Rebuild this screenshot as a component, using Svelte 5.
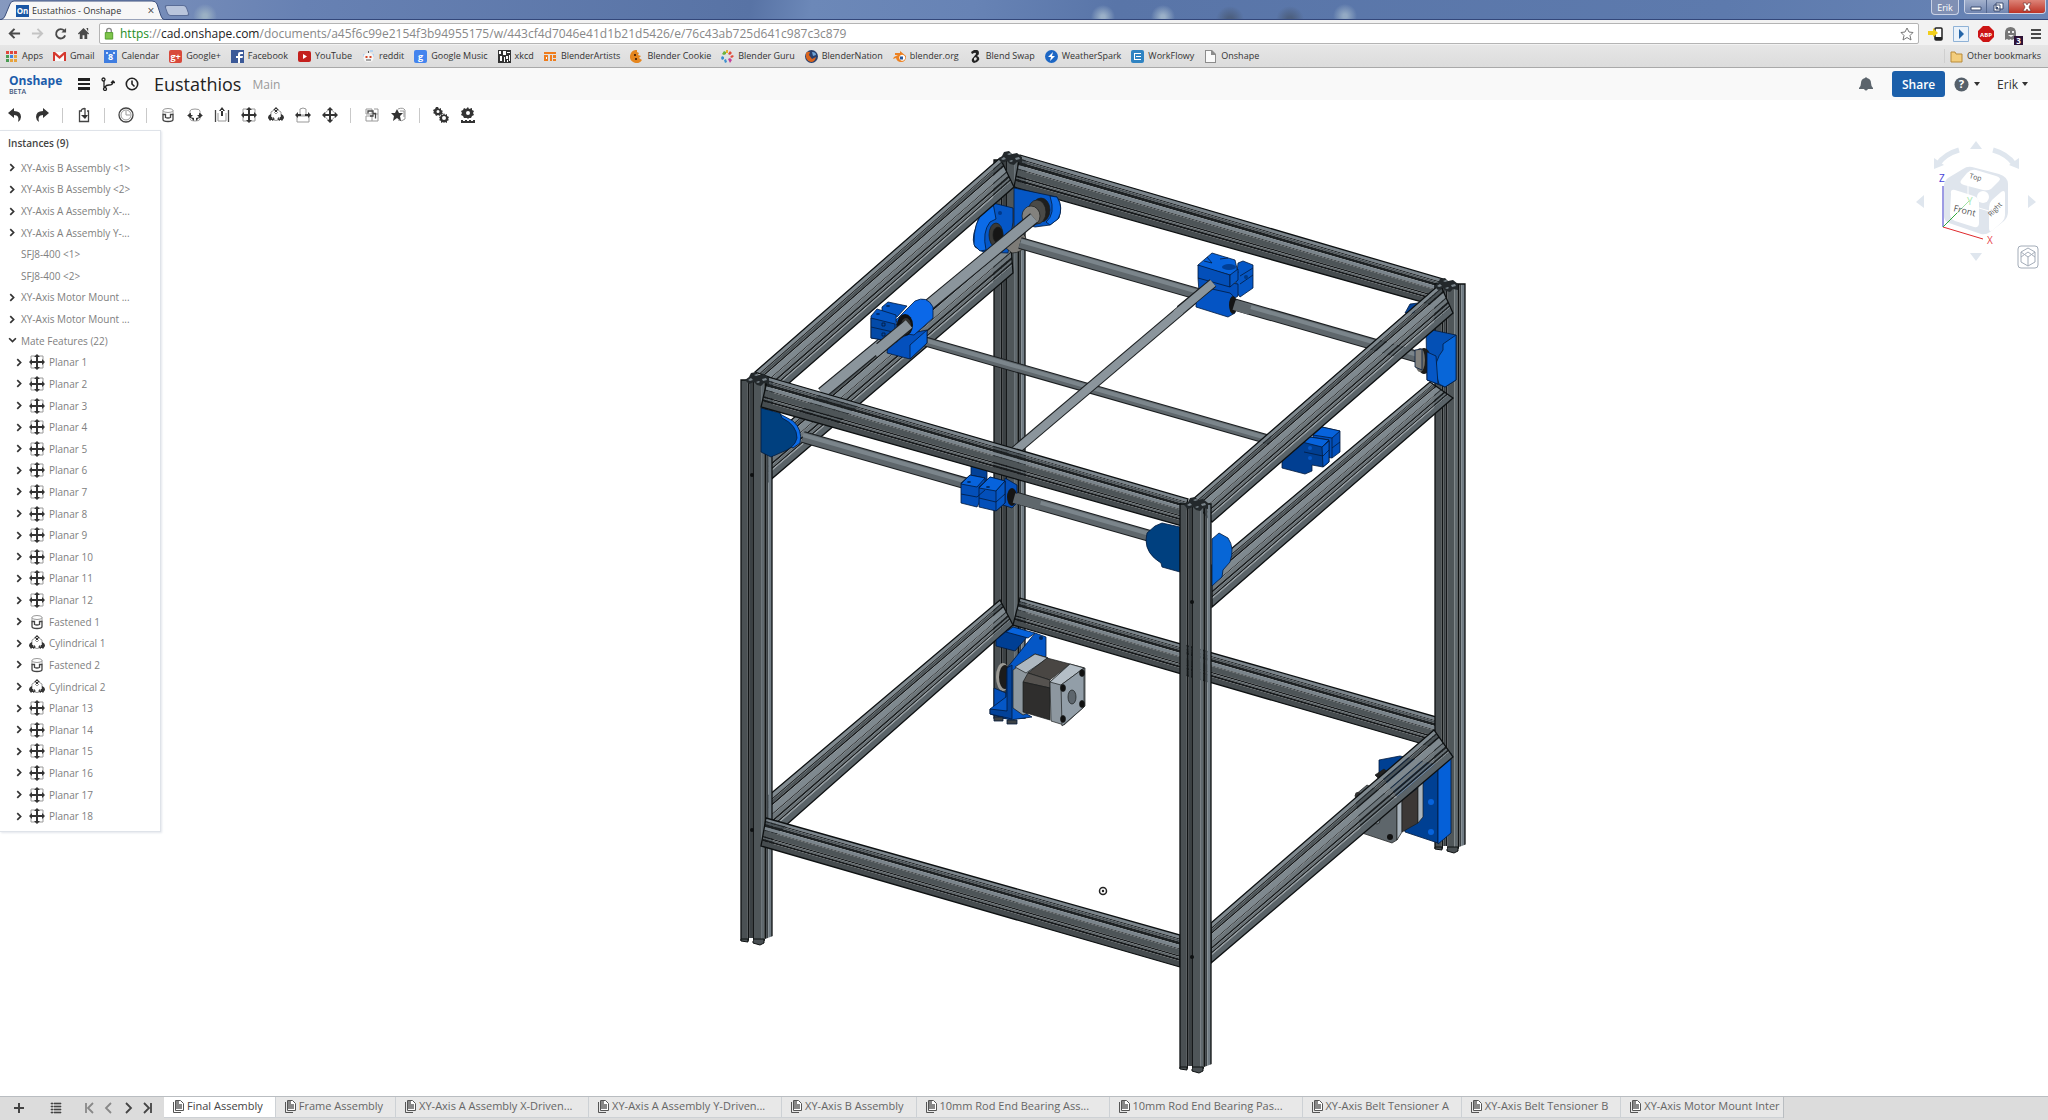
<script lang="ts">
	type Pt = [number, number];
	type Strip = [number, number, string];
	type Beam = { a: Pt; b: Pt; c: Pt; d: Pt; profile: Strip[] };
	type Icon = { line?: string; soft?: string; fill?: string };

	const url = {
		scheme: 'https',
		sep: '://',
		host: 'cad.onshape.com',
		path: '/documents/a45f6c99e2154f3b94955175/w/443cf4d7046e41d1b21d5426/e/76c43ab725d641c987c3c879'
	};

	const round = 'M2 0h9a2 2 0 0 1 2 2v9a2 2 0 0 1-2 2H2a2 2 0 0 1-2-2V2a2 2 0 0 1 2-2z';
	const disc = 'M6.500 0a6.500 6.500 0 1 1 0 13a6.500 6.500 0 1 1 0-13z';

	const bookmarks: { label: string; shapes: [string, string][]; letter?: string }[] = [
		{
			label: 'Apps',
			shapes: [
				['#e0463c', 'M1 1h3v3H1zM5 1h3v3H5zM9 1h3v3H9z'],
				['#4a9c52', 'M1 5h3v3H1z'],
				['#3f7fe0', 'M5 5h3v3H5z'],
				['#e8a33d', 'M9 5h3v3H9zM5 9h3v3H5zM9 9h3v3H9z'],
				['#4a9c52', 'M1 9h3v3H1z']
			]
		},
		{ label: 'Gmail', shapes: [['#fafafa', 'M1 2h11v9H1z'], ['#d5392f', 'M0 2h2l4.500 4L11 2h2v9h-2V5L6.500 9 2 5v6H0z']] },
		{ label: 'Calendar', shapes: [['#3f7de0', 'M0 0h13v13H0z'], ['#cfe0fb', 'M2 2h2v2H2zM9 2h2v2H9z']], letter: '8' },
		{ label: 'Google+', shapes: [['#d8493b', round]], letter: 'g+' },
		{ label: 'Facebook', shapes: [['#3b5998', 'M0 0h13v13H0z'], ['#fff', 'M7 13V8H5V6h2V4q0-2 2-2h3v2h-2q-1 0-1 1v1h3l-.5 2H9v5z']] },
		{ label: 'YouTube', shapes: [['#c4201d', 'M2 1h9q2 0 2 2v7q0 2-2 2H2q-2 0-2-2V3q0-2 2-2z'], ['#fff', 'M5 4l4 2.500L5 9z']] },
		{
			label: 'reddit',
			shapes: [
				['#b5d2ee', 'M1 4h3v3H1zM9 4h3v3H9zM8 0h3v2H8z'],
				['#f6f6f6', 'M6.500 3q5 0 5 4.500t-5 4.500t-5-4.500T6.500 3z'],
				['#d94422', 'M3.500 6h2v2h-2zM7.500 6h2v2h-2z'],
				['#555', 'M4 9.500h5v1H4zM6 1h1v2H6z']
			]
		},
		{ label: 'Google Music', shapes: [['#4484ee', round]], letter: 'g' },
		{
			label: 'xkcd',
			shapes: [
				['#333', 'M0 0h13v13H0z'],
				['#fff', 'M1 1h2v3H1zM5 1h3v4H5zM9 2h3v1H9zM2 6h2v5H2zM6 7h1v5H6zM8 6h2v3H8zM11 5h1v6h-1zM9 10h1v2H9z']
			]
		},
		{ label: 'BlenderArtists', shapes: [['#ee7d1e', 'M0 2h12v2H0zM0 5h4v6H0zM6 5h2v6H6zM9 5h3v3H9zM9 9h3v2H9z'], ['#fff', 'M2 7h1v2H2z']] },
		{ label: 'Blender Cookie', shapes: [['#e5861f', 'M7 0a6.500 6.500 0 1 0 5 10L9 8l2-2-3-1 1-2-2-1z'], ['#5a2d0a', 'M4 4h2v2H4zM5 8h2v2H5z']] },
		{
			label: 'Blender Guru',
			shapes: [
				['#e24a3a', 'M9 1l2 2-2 2-2-1zM11 5l2 1-2 2-2-1z'],
				['#6db33f', 'M3 1l2 1v2L3 5 1 4z'],
				['#3c8fd0', 'M1 6l2 1v2l-2 1-1-2zM3 10l2-1 1 3-2 1z'],
				['#c43f9a', 'M7 9l2-1 2 2-2 3z'],
				['#eab42c', 'M5 0h2v3H5z']
			]
		},
		{ label: 'BlenderNation', shapes: [['#28406f', disc], ['#d9641e', 'M1 3q2-2 4-1L4 5l3 4 4-2q-1 5-5 5Q0 11 1 3z'], ['#6fa4d8', 'M7 2q4 0 4 3L8 6z']] },
		{
			label: 'blender.org',
			shapes: [
				['#ec8121', 'M7 1l6 5q0 6-5 6-4 0-5-4L0 9l1-2 4-2H2V3h5z'],
				['#fff', 'M8 5a3 3 0 1 1 0 5.500A3 3 0 0 1 8 5z'],
				['#28579b', 'M7 6.500h3v3H7z']
			]
		},
		{ label: 'Blend Swap', shapes: [['#222', 'M5 0q5-1 5 3 0 2-2 3 3 1 2 4-2 3-5 3-3-1-2-4l4-5q0-2-2-1L3 4 2 2z'], ['#e0e0e0', 'M5 8l2-1 1 2-2 2-1-1z']] },
		{ label: 'WeatherSpark', shapes: [['#1c66c4', disc], ['#fff', 'M8 2L3 7h3l-1 4 5-5H7z']] },
		{ label: 'WorkFlowy', shapes: [['#2f83c2', round], ['#fff', 'M3 3h7v1H3zM5 6h5v1H5zM3 9h7v1H3zM3 3h1v7H3z']] },
		{ label: 'Onshape', shapes: [['#8c8c8c', 'M1 0h7l4 4v9H1z'], ['#fafafa', 'M2 1h5v4h4v7H2z']] }
	];

	const fourWay = 'M7 3h2v4h4V5l3 3-3 3V9H9v4h2l-3 3-3-3h2V9H3v2L0 8l3-3v2h4zM5 3l3-3 3 3z';
	const icons: Record<string, Icon> = {
		undo: { fill: 'M7 1v3q7 0 7 6 0 3-3 5 2-7-4-7v3L1 6z' },
		redo: { fill: 'M9 1v3Q2 4 2 10q0 3 3 5-2-7 4-7v3l6-5z' },
		insert: { line: 'M6 4H3.500v10.500h9V4H11M9 1v8M9 1.500q-4 0-4 3', fill: 'M5 8h7l-3 4z' },
		history: { line: 'M8 1a7 7 0 1 1 0 14A7 7 0 0 1 8 1z', soft: 'M8 3a5 5 0 1 1 0 10A5 5 0 0 1 8 3zM8 4v4h4' },
		fastened: {
			soft: 'M3 3.500q0-2 5-2t5 2-5 2-5-2zM3 3.500v4M13 3.500v4',
			line: 'M3 7.500v5q0 2 5 2t5-2v-5h-2.500v3q-2.500 1-5 0v-3z'
		},
		revolute: {
			soft: 'M3 4q0-2 5-2t5 2v8q0 2-5 2t-5-2z',
			fill: 'M4 6v2l2 0-3 3-3-3h1Q2 6 4 6zM12 6v2l-2 0 3 3 3-3h-1q-1-2-3-2zM3 10l4 1v3zM13 10l-4 1v3z'
		},
		slider: { soft: 'M4 6v8h8V6', line: 'M1.500 3v12M14.500 3v12', fill: 'M7 3h2v6H7zM5 4l3-4 3 4z' },
		planar: { soft: 'M2 2h12v12H2z', fill: fourWay },
		cylindrical: {
			soft: 'M3 5q5-4 10 0v6q-5 5-10 0z',
			fill: 'M7 2h2v4H7zM5 3l3-3 3 3zM6 5h4L8 7zM3 7v3h3l-4 4-2-3q0-3 3-4zM13 7v3h-3l4 4 2-3q0-3-3-4zM4 10l3 2-3 2zM12 10l-3 2 3 2z'
		},
		pin: { soft: 'M5 2q3-2 6 0v6H5zM2 9h12v6H2z', fill: 'M0 8l3-3v2h3v2H3v2zM16 8l-3-3v2h-3v2h3v2z' },
		ball: { soft: 'M8 3a5 5 0 1 1 0 10A5 5 0 0 1 8 3z', fill: fourWay },
		group: { line: 'M4 6.500V4h5v5H6M11.500 11.500v-5H9', soft: 'M2 2h6v5H2zM10 2h4v12H2V9h6v5M10 7h4' },
		relation: { soft: 'M7 2q5-2 7 1v9q-3 3-7 1M9 4h4v6', fill: 'M6 2l2 4 4 0-3 3 1 5-4-3-4 3 1-5-3-3h4z' },
		gears: { fill: 'M5 0l1 2 2-1v2l2 1-1 1 1 2-2 0-1 2-2-1-2 1-1-2-2-1 1-1-1-2 2-1 1-2zM5 3a1.500 1.500 0 1 0 0 3 1.500 1.500 0 0 0 0-3zM11 6l1 2 2-1 0 2 2 1-1 2 1 1-2 1v2l-2-1-1 1-1-1-2 1 0-2-2-1 1-1-1-2 2-1v-2l2 1zM11 9a2 2 0 1 0 0 4 2 2 0 0 0 0-4z' },
		rack: { fill: 'M8 0l1 2 3-1v2l2 1-1 2 1 2-2 1-1 2-2 0-1 1-1-1-3 0-1-2-2-1 1-2-1-2 2-1 1-2 2 1zM8 4a2 2 0 1 0 0 4 2 2 0 0 0 0-4zM1 13h2v1h2v-1h2v1h2v-1h2v1h2v-1h2v3H1z' }
	};

	const tools = [
		['undo', 'redo'],
		['insert'],
		['history'],
		['fastened', 'revolute', 'slider', 'planar', 'cylindrical', 'pin', 'ball'],
		['group', 'relation'],
		['gears', 'rack']
	];

	const instances = [
		{ name: 'XY-Axis B Assembly <1>', nested: true },
		{ name: 'XY-Axis B Assembly <2>', nested: true },
		{ name: 'XY-Axis A Assembly X-...', nested: true },
		{ name: 'XY-Axis A Assembly Y-...', nested: true },
		{ name: 'SFJ8-400 <1>', nested: false },
		{ name: 'SFJ8-400 <2>', nested: false },
		{ name: 'XY-Axis Motor Mount ...', nested: true },
		{ name: 'XY-Axis Motor Mount ...', nested: true }
	];

	const mates = [
		...Array.from({ length: 12 }, (_, i) => ({ kind: 'planar', name: `Planar ${i + 1}` })),
		{ kind: 'fastened', name: 'Fastened 1' },
		{ kind: 'cylindrical', name: 'Cylindrical 1' },
		{ kind: 'fastened', name: 'Fastened 2' },
		{ kind: 'cylindrical', name: 'Cylindrical 2' },
		...Array.from({ length: 6 }, (_, i) => ({ kind: 'planar', name: `Planar ${i + 13}` }))
	];

	const tabs = [
		'Final Assembly',
		'Frame Assembly',
		'XY-Axis A Assembly X-Driven...',
		'XY-Axis A Assembly Y-Driven...',
		'XY-Axis B Assembly',
		'10mm Rod End Bearing Ass...',
		'10mm Rod End Bearing Pas...',
		'XY-Axis Belt Tensioner A',
		'XY-Axis Belt Tensioner B',
		'XY-Axis Motor Mount Inter'
	];
	let activeTab = 0;
	let matesOpen = true;

	// extrusion profiles: slices across a beam, from its first edge to its second
	const sideProfile: Strip[] = [
		[0, 0.12, '#7f898f'],
		[0.12, 0.16, '#22272a'],
		[0.16, 0.24, '#4c5458'],
		[0.24, 0.29, '#15181a'],
		[0.29, 0.47, '#7f898f'],
		[0.47, 0.5, '#23282b'],
		[0.5, 0.61, '#6d767b'],
		[0.61, 0.67, '#1b1f21'],
		[0.67, 0.73, '#687176'],
		[0.73, 0.78, '#1b1f21'],
		[0.78, 0.81, '#8a949a'],
		[0.81, 1, '#5a6368']
	];
	const frontProfile: Strip[] = [
		[0, 0.11, '#7a848b'],
		[0.11, 0.15, '#24292c'],
		[0.15, 0.21, '#4b5358'],
		[0.21, 0.31, '#1d2123'],
		[0.31, 0.42, '#7a848b'],
		[0.42, 0.45, '#2b3033'],
		[0.45, 0.64, '#4e5558'],
		[0.64, 0.69, '#16191b'],
		[0.69, 0.74, '#5b6367'],
		[0.74, 0.81, '#181b1d'],
		[0.81, 1, '#464c4f']
	];
	const postProfile: Strip[] = [
		[0, 0.22, '#4a5053'],
		[0.22, 0.28, '#111415'],
		[0.28, 0.36, '#3b4144'],
		[0.36, 0.42, '#15181a'],
		[0.42, 0.65, '#4f5659'],
		[0.65, 0.75, '#5f686d'],
		[0.75, 0.81, '#111415'],
		[0.81, 0.88, '#3b4144'],
		[0.88, 1, '#717c84']
	];

	const side = (a: Pt, b: Pt, c: Pt, d: Pt): Beam => ({ a, b, c, d, profile: sideProfile });
	const front = (a: Pt, b: Pt, c: Pt, d: Pt): Beam => ({ a, b, c, d, profile: frontProfile });
	const post = (x: number, w: number, top: number, bottom: number): Beam => ({
		a: [x, top],
		b: [x, bottom],
		c: [x + w, bottom],
		d: [x + w, top],
		profile: postProfile
	});

	function mix(p: Pt, q: Pt, t: number) {
		return `${(p[0] + (q[0] - p[0]) * t).toFixed(1)},${(p[1] + (q[1] - p[1]) * t).toFixed(1)}`;
	}

	function slice(beam: Beam, from: number, to: number) {
		const { a, b, c, d } = beam;
		return [mix(a, d, from), mix(b, c, from), mix(b, c, to), mix(a, d, to)].join(' ');
	}

	const backFrame = [
		post(994, 31, 160, 718),
		front([1020, 598], [1440, 718], [1440, 749], [1013, 625]),
		front([1020, 155], [1443, 279], [1443, 308], [1014, 187]),
		post(1435, 30, 284, 848),
		side([768, 796], [1000, 600], [1013, 625], [768, 841]),
		side([768, 440], [1010, 232], [1013, 273], [768, 482])
	];
	const leftTop = [side([755, 372], [1000, 158], [1014, 187], [788, 384])];
	const rightLower = [side([1212, 565], [1430, 382], [1453, 398], [1212, 607])];
	const rightTop = [side([1192, 500], [1440, 284], [1453, 313], [1212, 522])];
	const rightBottom = [side([1211, 923], [1434, 730], [1453, 757], [1211, 963])];
	const frontLeft = [post(741, 31, 380, 940)];
	const frontBeams = [
		front([766, 818], [1180, 935], [1180, 967], [761, 846]),
		front([768, 377], [1188, 499], [1182, 526], [761, 407])
	];
	const frontRight = [post(1180, 31, 504, 1068)];

	const caps: Pt[] = [
		[1010, 159],
		[757, 380],
		[1196, 505],
		[1446, 286]
	];
	const feet: Pt[] = [
		[741, 940],
		[1180, 1068],
		[1435, 848]
	];
</script>

{#snippet glyph(name: string)}
	<svg class="glyph" viewBox="0 0 16 16" aria-hidden="true">
		<path class="soft" d={icons[name].soft ?? ''} />
		<path class="line" d={icons[name].line ?? ''} />
		<path class="solid" fill-rule="evenodd" d={icons[name].fill ?? ''} />
	</svg>
{/snippet}

{#snippet beams(list: Beam[])}
	{#each list as beam}
		{#each beam.profile as [from, to, fill]}
			<polygon points={slice(beam, from, to)} {fill} />
		{/each}
		<polygon points={slice(beam, 0, 1)} fill="none" stroke="#0d1011" stroke-width="1.300" />
	{/each}
{/snippet}

<div class="window">
	<header class="titlebar">
		<div class="browser-tab">
			<svg class="tab-shape" viewBox="0 0 166 20" preserveAspectRatio="none" aria-hidden="true">
				<path d="M0 20Q4 19 5 16L10 4q1-3 4-3h138q4 0 5 3l4 12q1 4 5 4z" fill="#f7f7f7" stroke="#3b4f7c" />
			</svg>
			<span class="favicon">On</span>
			<span class="browser-title">Eustathios - Onshape</span>
			<button class="close" aria-label="Close tab">×</button>
		</div>
		<button class="new-tab" aria-label="New tab"></button>
		<div class="window-buttons">
			<button class="user">Erik</button>
			<div class="group">
				<button aria-label="Minimize"><svg viewBox="0 0 12 10"><path d="M1 5h10v3H1z" fill="#fff" stroke="#3d4d70" /></svg></button>
				<button aria-label="Restore">
					<svg viewBox="0 0 12 10"><path d="M4 1h7v6H4zM2 3h6v6H2z" fill="#fff" stroke="#3d4d70" /><path d="M4 5h2v2H4z" fill="#3d4d70" /></svg>
				</button>
				<button class="exit" aria-label="Close"><svg viewBox="0 0 12 10"><path d="M2 1h3l1 2 1-2h3L8 5l2 4H7L6 7 5 9H2l2-4z" fill="#fff" stroke="#6b2a26" stroke-width=".6" /></svg></button>
			</div>
		</div>
	</header>

	<nav class="navbar" aria-label="Browser">
		<button aria-label="Back"><svg viewBox="0 0 14 14"><path d="M7 2L2 7l5 5M2 7h11" fill="none" stroke="#4a4a4a" stroke-width="2.200" /></svg></button>
		<button aria-label="Forward"><svg viewBox="0 0 14 14"><path d="M7 2l5 5-5 5M12 7H1" fill="none" stroke="#c4c4c4" stroke-width="2" /></svg></button>
		<button aria-label="Reload"><svg viewBox="0 0 14 14"><path d="M11 4a5 5 0 1 0 1 5" fill="none" stroke="#4a4a4a" stroke-width="2" /><path d="M13 1v5H8z" fill="#4a4a4a" /></svg></button>
		<button aria-label="Home"><svg viewBox="0 0 14 14"><path d="M7 1l6 6-1 1-1-1v6H8V9H6v4H3V7L2 8 1 7zM10 1h2v4z" fill="#4a4a4a" /></svg></button>
		<div class="omnibox">
			<svg class="lock" viewBox="0 0 10 14" aria-hidden="true">
				<path d="M2.500 6V4q0-2.500 2.500-2.500T7.500 4v2" fill="none" stroke="#8a8a8a" stroke-width="1.500" />
				<path d="M1 6h8v7H1z" fill="#7fc54b" stroke="#4f9a2a" />
			</svg>
			<a class="url" href="#top"><span class="scheme">{url.scheme}</span>{url.sep}<span class="host">{url.host}</span>{url.path}</a>
			<svg class="star" viewBox="0 0 14 14" aria-hidden="true"><path d="M7 1l2 4 4 .5-3 3 1 4.500-4-2.500L3 13l1-4.500-3-3L5 5z" fill="#fff" stroke="#777" /></svg>
		</div>
		<div class="extensions">
			<button aria-label="Send to phone">
				<svg viewBox="0 0 16 16"><rect x="7" y="2" width="7" height="12" rx="1" fill="#fff" stroke="#222" stroke-width="1.500" /><path d="M7 11h7v3H7z" fill="#222" /><path d="M0 5h5V2l5 5-5 4V9H0z" fill="#f2cf1c" /></svg>
			</button>
			<button aria-label="Play"><svg viewBox="0 0 16 16"><path d="M.5.5h15v15H.5z" fill="#eaf2fa" stroke="#8fb2d6" /><path d="M6 3l5 5-5 5z" fill="#2465a8" /></svg></button>
			<button aria-label="Adblock Plus">
				<svg viewBox="0 0 16 16"><path d="M5 0h6l5 5v6l-5 5H5l-5-5V5z" fill="#cc1414" /><text x="8" y="11" text-anchor="middle" class="abp">ABP</text></svg>
			</button>
			<button class="ghost" aria-label="Ghostery">
				<svg viewBox="0 0 16 16"><path d="M2 14V7q0-6 5.500-6T13 7v7l-2-1-2 1-1.500-1L6 14l-2-1z" fill="#777" /><path d="M5 5h2v2H5zM9 5h2v2H9zM5 9h6l-3 2z" fill="#eee" /></svg>
				<span>3</span>
			</button>
			<button aria-label="Menu"><svg viewBox="0 0 16 16"><path d="M3 3h10v2H3zM3 7h10v2H3zM3 11h10v2H3z" fill="#4a4a4a" /></svg></button>
		</div>
	</nav>

	<nav class="bookmarks" aria-label="Bookmarks">
		{#each bookmarks as mark}
			<a href="#top">
				<svg viewBox="0 0 13 13" aria-hidden="true">
					{#each mark.shapes as [fill, d]}
						<path {d} {fill} />
					{/each}
					{#if mark.letter}
						<text x="6.500" y="10" text-anchor="middle">{mark.letter}</text>
					{/if}
				</svg>
				{mark.label}
			</a>
		{/each}
		<a class="other" href="#top">
			<svg viewBox="0 0 13 13" aria-hidden="true"><path d="M1 2h4l1 2h6v8H1z" fill="#f3cd7c" stroke="#b98b3a" /></svg>
			Other bookmarks
		</a>
	</nav>

	<header class="app-header">
		<a class="logo" href="#top"><b>Onshape</b><small>BETA</small></a>
		<button aria-label="Document menu"><svg viewBox="0 0 14 14"><path d="M1 1h12v3H1zM1 6h12v2H1zM1 10h12v3H1z" fill="#222" /></svg></button>
		<button aria-label="Versions">
			<svg viewBox="0 0 14 14" fill="none" stroke="#222" stroke-width="1.300"><circle cx="2.500" cy="2.500" r="1.500" /><circle cx="4" cy="12" r="1.500" /><path d="M3 4v6M4 10q1-2 4-2 4 0 4-3M10 6l2-2 2 2" /></svg>
		</button>
		<button aria-label="History"><svg viewBox="0 0 14 14" fill="none" stroke="#222" stroke-width="1.600"><circle cx="7" cy="7" r="5.700" /><path d="M7 3.500V7l2.500 2.500" /></svg></button>
		<h1>Eustathios</h1>
		<span class="workspace">Main</span>
		<div class="account">
			<button class="bell" aria-label="Notifications"><svg viewBox="0 0 14 14"><path d="M7 0l1 1q4 1 4 5 0 3 2 5v1H0v-1q2-2 2-5 0-4 4-5zM5 12h4q-2 3-4 0z" fill="#5b646c" /></svg></button>
			<button class="share">Share</button>
			<button class="help" aria-label="Help">
				<svg viewBox="0 0 16 16"><circle cx="8" cy="8" r="7.500" fill="#56606a" /><text x="8" y="12" text-anchor="middle">?</text></svg>
				<i class="caret"></i>
			</button>
			<button class="profile">Erik <i class="caret"></i></button>
		</div>
	</header>

	<div class="toolbar">
		{#each tools as group, i}
			{#if i > 0}<i class="divider"></i>{/if}
			{#each group as name}
				<button aria-label={name}>{@render glyph(name)}</button>
			{/each}
		{/each}
	</div>

	<main class="stage">
		<svg class="model" viewBox="0 130 2048 966" role="img" aria-label="Final Assembly">
			{@render beams(backFrame)}

			<!-- rear left bearing mounts -->
			<g class="part">
				<path fill="#0557c6" d="M993 203L1013 208V222L1008 253L983 252L975 247Q972 240 974 233L978 220L985 210Z" />
				<path fill="#0b6be8" d="M985 210Q973 222 974 245L980 251L986 250Q982 232 990 222L996 219L993 203Z" />
				<circle cx="1000" cy="213" r="2" fill="#00388a" />
				<path fill="#0557c6" d="M1014 188L1057 197Q1063 205 1059 218L1050 225L1035 227L1024 224L1023 232L1014 230Z" />
				<path fill="#0b6be8" d="M1050 196L1057 197Q1064 208 1058 219L1050 225L1046 222Q1056 214 1050 196Z" />
			</g>
			{@render beams(leftTop)}
			<g class="metal">
				<ellipse cx="996" cy="235" rx="7" ry="12" fill="#3a3a38" />
				<ellipse cx="998" cy="235" rx="5" ry="8" fill="#161616" />
				<ellipse cx="1041" cy="210" rx="9" ry="12" fill="#1e1e1d" />
				<ellipse cx="1037" cy="212" rx="9" ry="12" fill="#4a4a47" />
				<ellipse cx="1031" cy="216" rx="9" ry="10" fill="#83827e" />
				<path fill="#7d7b77" d="M1008 236L1022 233Q1027 236 1026 244Q1022 253 1012 253L1006 248Z" />
			</g>

			<!-- rods -->
			<g class="rods">
				<path class="edge" d="M1020 243L1418 357" />
				<path class="mid" d="M1020 243L1418 357" />
				<path class="shine" d="M1021 241L1418 355" />
				<path class="edge" d="M1034 218L822 393" />
				<path class="light" d="M1034 218L822 393" />
				<path class="edge thin" d="M913 338L1270 440" />
				<path class="mid thin" d="M913 338L1270 440" />
				<path class="shine" d="M914 337L1270 439" />
				<path class="edge thin" d="M1213 283L1010 455" />
				<path class="light thin" d="M1213 283L1010 455" />
				<path class="edge" d="M803 437L1150 536" />
				<path class="mid" d="M803 437L1150 536" />
				<path class="shine" d="M803 435L1150 534" />
			</g>

			<!-- left and rear carriages -->
			<g class="part">
				<path fill="#0450bd" d="M888 343L912 333L927 330V343L910 359L887 353Z" />
				<path fill="#0763dc" d="M910 345L927 330V343L910 359Z" />
				<path fill="#0557c6" d="M882 307L888 302L907 306L897 317L882 312Z" />
				<path fill="#0557c6" d="M871 316L877 309L896 315L897 342L871 338Z" />
				<path fill="#034aa8" d="M871 318L895 324V342L871 338Z" />
				<path fill="none" d="M871 327L893 332M882 323h3v3h-3zM882 333h3v3h-3z" />
				<ellipse cx="888" cy="306" rx="2" ry="1" fill="#002b66" />
				<ellipse cx="878" cy="314" rx="2" ry="1" fill="#002b66" />
				<path fill="#0b68e8" d="M896 320L915 301Q927 295 933 307V318L914 335Q900 335 896 320Z" />
				<ellipse cx="905" cy="325" rx="8" ry="11" fill="#111" />
				<ellipse cx="906" cy="326" rx="5" ry="8" fill="#33322f" />
				<path fill="#0557c6" d="M1238 263L1243 261L1253 265V288L1240 297L1235 290Z" />
				<path fill="none" d="M1240 284L1253 275M1240 276L1253 268" />
				<path fill="#0450bd" d="M1198 278L1238 284V296L1232 300L1199 292Z" />
				<path fill="#0454c4" d="M1196 297L1203 287L1230 293Q1238 298 1235 313L1228 317L1196 307Z" />
				<path fill="#0763dc" d="M1198 265L1212 253L1235 260L1238 273L1230 275L1198 266Z" />
				<path fill="#034fb9" d="M1198 265L1230 275V287L1198 278Z" />
				<path fill="#0557c6" d="M1230 275L1238 269V280L1230 287Z" />
				<ellipse cx="1229" cy="267" rx="7" ry="3" fill="#013f96" />
				<path fill="none" d="M1204 261L1212 263L1207 257M1220 259L1228 258" />
				<ellipse cx="1233" cy="305" rx="4" ry="9" fill="#151515" />
				<circle cx="1246" cy="277" r="2" fill="#003a88" />
			</g>
			<g class="rods">
				<path class="edge" d="M907 326L880 348" />
				<path class="light" d="M909 324L874 353" />
				<path class="edge thin" d="M1213 283L1180 310" />
				<path class="light thin" d="M1213 283L1176 314" />
				<path class="mid" d="M1234 305L1250 310" />
			</g>

			<!-- right hand side -->
			<path class="dark-blue" d="M1405 313L1410 304L1418 303L1414 313Z" />
			{@render beams(rightLower)}
			<g class="part">
				<path fill="#0450b5" d="M1426 330L1432 330L1456 335V380L1445 387L1427 380Z" />
				<path fill="#0866d8" d="M1456 335L1443 344V350Q1434 361 1436 374L1439 384L1445 387L1456 380Z" />
				<ellipse cx="1424" cy="361" rx="7" ry="13" fill="#1c1c1b" />
				<ellipse cx="1420" cy="360" rx="5" ry="12" fill="#6f6e6a" />
				<path fill="#83827e" d="M1415 350L1422 349V370L1415 367Z" />
				<path fill="#0557c6" d="M1427 352L1436 356L1438 384L1427 380Z" />
				<path fill="#034fb9" d="M1313 435L1322 427L1340 431V452L1332 458L1313 455Z" />
				<path fill="#0763dc" d="M1313 435L1322 427L1340 431L1332 438Z" />
				<path fill="#013f92" d="M1302 442L1310 437L1329 440V462L1323 467L1312 465V471L1305 474L1282 468V460Z" />
				<path fill="#0763dc" d="M1302 442L1310 437L1329 440L1322 447Z" />
				<path fill="#0557c6" d="M1322 447L1329 441V462L1323 467Z" />
				<path fill="none" d="M1304 452L1323 456L1329 450M1332 448L1340 442M1332 438V458" />
				<circle cx="1310" cy="448" r="2" fill="#0557c6" />
				<circle cx="1310" cy="458" r="2" fill="#0557c6" />
			</g>
			{@render beams(rightTop)}

			<!-- rear motor -->
			<g class="part">
				<path fill="#003f94" d="M996 640L1008 630L1028 636L1015 651L996 646Z" />
				<path fill="#0763dc" d="M1006 632L1013 627L1035 633L1028 638Z" />
				<ellipse cx="1003" cy="677" rx="7" ry="14" fill="#9b9a95" />
				<ellipse cx="1005" cy="677" rx="6" ry="12" fill="#1c1c1b" />
				<path fill="#034fb9" d="M994 688L1006 693V702L994 707Z" />
				<path fill="#0557c6" d="M1007 668L1035 633L1046 637V657L1033 655L1015 670V707L1032 717L1010 720L990 714V709L1006 697Z" />
				<path fill="#034299" d="M1007 668L1012 665V719L990 714V709L1007 711Z" />
				<circle cx="1041" cy="638" r="2" fill="#00275c" />
				<path fill="#3c4144" d="M994 717h9v4h-9zM1007 720h10v4h-10z" />
			</g>
			<g class="metal">
				<path fill="#8e989f" d="M1013 670L1035 654L1048 658V705L1023 715L1013 708Z" />
				<path fill="#aeb8c0" d="M1015 667L1035 654L1048 658L1026 673Z" />
				<path fill="#494643" d="M1028 673L1047 658L1070 664L1050 680Z" />
				<path fill="#55524f" d="M1023 682L1028 673L1050 680V688Z" />
				<path fill="#2f2e2d" d="M1023 682L1050 688V720L1023 712Z" />
				<path fill="#8d979f" d="M1050 682L1070 664L1085 668V706L1064 725L1051 721Z" />
				<path fill="#b4bec6" d="M1050 682L1070 664L1084 668L1061 685Z" />
				<path fill="#929ea8" d="M1061 685L1084 668V707L1062 726Z" />
				<ellipse cx="1072" cy="697" rx="4" ry="7" fill="#5d666d" />
				{#each [[1063, 688], [1082, 673], [1082, 704], [1063, 719]] as [cx, cy]}
					<ellipse {cx} {cy} rx="2.500" ry="3.500" fill="#111" />
				{/each}
			</g>

			<!-- right motor -->
			<g class="part">
				<path fill="#004093" d="M1379 760L1400 756L1438 765V843L1405 832L1400 800L1379 773Z" />
				<path fill="#0560d8" d="M1438 763L1451 753V833L1438 844Z" />
				{#each [772, 802, 832] as cy}
					<circle cx="1431" {cy} r="3" fill="#0763dc" />
				{/each}
			</g>
			<g class="metal">
				<path fill="#5e666b" d="M1355 795L1367 785L1397 800V840L1392 843L1362 833Z" />
				<path fill="#a9b4bd" d="M1397 802L1402 799V832L1397 840Z" />
				<path fill="#3c3836" d="M1402 800L1418 788V823L1402 832Z" />
				<path fill="#a9b4bd" d="M1418 785L1423 782V817L1418 823Z" />
				<path fill="#222" d="M1375 775L1384 769L1390 774L1380 780Z" />
				<circle cx="1390" cy="837" r="3" fill="#111" />
				<circle cx="1358" cy="795" r="3" fill="#333" />
				<ellipse cx="1377" cy="820" rx="3" ry="4" fill="#8e989f" />
			</g>
			{@render beams(rightBottom)}

			<!-- front -->
			{@render beams(frontLeft)}
			<g class="part">
				<path fill="#0b6be8" d="M780 414L793 421Q803 430 800 443L793 448L780 440Z" />
				<path fill="#00407f" d="M761 408L780 413L782 418Q797 425 797 438Q795 448 780 453L771 457L761 452Z" />
			</g>
			<g class="part">
				<path fill="#034299" d="M971 466L987 470V482L971 478Z" />
				<path fill="#034fb9" d="M961 483L970 475L985 478V492L977 507L961 503Z" />
				<path fill="#0763dc" d="M961 484L970 475L985 478L977 487Z" />
				<path fill="#0450bd" d="M1005 478L1017 485V503L1012 508L1003 505Z" />
				<path fill="#034fb9" d="M979 487L990 477L1005 481V503L996 511L979 507Z" />
				<path fill="#0763dc" d="M979 488L990 477L1005 481L996 491Z" />
				<path fill="#0557c6" d="M996 491L1005 481V503L996 511Z" />
				<path fill="none" d="M961 494L977 497L985 490M979 498L996 502L1005 494" />
				<ellipse cx="969" cy="482" rx="2" ry="1" fill="#002b66" />
				<ellipse cx="988" cy="487" rx="2" ry="1" fill="#002b66" />
				<ellipse cx="1012" cy="497" rx="5" ry="9" fill="#151515" />
			</g>
			<g class="rods"><path class="mid" d="M1014 498L1040 505" /></g>
			{@render beams(frontBeams)}
			<g class="part">
				<path fill="#00407f" d="M1162 523L1180 527V572L1162 567L1161 563Q1146 554 1146 540L1147 533L1155 526Z" />
				<path fill="#0766d6" d="M1212 539L1219 533L1228 538Q1235 548 1230 562L1223 570L1222 577L1212 586Z" />
			</g>
			{@render beams(frontRight)}

			<!-- open ends of the posts -->
			{#each caps as [x, y]}
				<path fill="#23282b" d="M{x - 12} {y}l4-3 2-4 5-1 3 3 5-1 5 4v6l-5-1-3 3-4-1-3-3-5 2z" />
				<path fill="#7a848b" d="M{x - 9} {y}l3-2 2 2-3 1zM{x - 3} {y - 5}l3-1 2 1-3 1zM{x + 5} {y - 1}l4-1 1 2-4 1zM{x - 1} {y + 2}l3-1 1 1-2 1z" />
			{/each}
			{#each feet as [x, y]}
				<path fill="#4a5053" stroke="#0d1011" d="M{x} {y - 1}v2l7 1v-3zM{x + 12} {y - 1}v4l7 2 4-2v-4z" />
				<path fill="#fff" d="M{x + 8} {y + 1}v-3h4v3zM{x + 24} {y + 1}v-2l8-3v5z" />
			{/each}
			{#each [[752, 475], [752, 830], [1192, 602], [1192, 957]] as [x, y]}
				<circle cx={x} cy={y} r="2" fill="#0d1011" />
			{/each}

			<circle cx="1103" cy="891" r="3.500" fill="#fff" stroke="#222" stroke-width="1.500" />
			<circle cx="1103" cy="891" r="1.200" fill="#222" />
		</svg>

		<aside class="instances">
			<h2>Instances (9)</h2>
			<ul>
				{#each instances as item}
					<li>
						{#if item.nested}
							<button class="chevron" aria-label="Expand"><svg viewBox="0 0 8 8"><path d="M2 1l3 3-3 3" /></svg></button>
						{/if}
						<span class="name">{item.name}</span>
					</li>
				{/each}
				<li>
					<button class="chevron" aria-label="Collapse" on:click={() => (matesOpen = !matesOpen)}><svg viewBox="0 0 8 8"><path d="M1 2l3 3 3-3" /></svg></button>
					<span class="name">Mate Features (22)</span>
				</li>
				{#if matesOpen}
					{#each mates as mate}
						<li class="mate">
							<button class="chevron" aria-label="Expand"><svg viewBox="0 0 8 8"><path d="M2 1l3 3-3 3" /></svg></button>
							{@render glyph(mate.kind)}
							<span>{mate.name}</span>
						</li>
					{/each}
				{/if}
			</ul>
		</aside>

		<div class="view-cube">
			<svg viewBox="0 0 130 130" role="img" aria-label="View cube">
				<path fill="#dfe6ee" d="M66 3l6 8H60zM6 64l8-7v13zM126 64l-8-7v13zM66 123l-6-8h12z" />
				<path fill="none" stroke="#dfe6ee" stroke-width="5" d="M49 12Q35 16 28 26M83 12q14 4 21 14" />
				<path fill="#dfe6ee" d="M24 20v11l10-4zM109 20v11l-10-4z" />
				<path fill="#dfe5ed" d="M53 31q4-3 9-2l27 7q9 3 9 10v28q0 5-4 9L80 94q-4 3-9 2L39 85q-5-2-5-7V48q0-5 4-8z" />
				<path fill="#fff" d="M57 35q4-4 9-3l20 6q6 2 3 5l-8 8q-3 2-8 1L54 47q-6-2-2-6z" />
				<path fill="#fff" d="M41 56q-1-5 4-4l19 6q5 2 5 7v20q0 5-5 4l-19-6q-5-2-5-7z" />
				<path fill="#fff" d="M79 69q0-4 3-7l9-8q4-3 4 2v21q0 4-3 7l-9 8q-4 3-4-2z" />
				<circle cx="73" cy="59" r="6" fill="#fff" />
				<path d="M58 48v10M69 70l10 3" stroke="#fff" />
				<path d="M33 48v41" stroke="#3a36c8" />
				<path d="M33 89l40 12" stroke="#e0292c" />
				<path d="M33 89l14-14" stroke="#2faa3c" />
				<path d="M47 75l12-12" stroke="#9fe0a4" />
				<text class="axis" x="29" y="44" fill="#4844d8">Z</text>
				<text class="axis" x="77" y="106" fill="#e8484c">X</text>
				<text class="axis" x="57" y="67" fill="#a8e8ae">Y</text>
				<text class="face" transform="translate(43 73) rotate(14)">Front</text>
				<text class="face small" transform="translate(59 40) rotate(14)">Top</text>
				<text class="face small" transform="translate(81 79) rotate(-46)">Right</text>
			</svg>
			<button aria-label="View options">
				<svg viewBox="0 0 22 24"><path d="M4 1h14q3 0 3 3v16q0 3-3 3H4q-3 0-3-3V4q0-3 3-3zM11 3l7 4v10l-7 4-7-4V7zM4 7l7 5 7-5M11 12v9M4 12l7-5 7 5" /></svg>
			</button>
		</div>
	</main>

	<footer class="tabbar">
		<div class="tab-controls">
			<button aria-label="Add tab"><svg viewBox="0 0 12 12"><path d="M5 1h2v4h4v2H7v4H5V7H1V5h4z" fill="#444" /></svg></button>
			<button aria-label="Tab list"><svg viewBox="0 0 12 12"><path d="M1 1h2v1H1zM4 1h7v1H4zM1 4h2v1H1zM4 4h7v1H4zM1 7h2v1H1zM4 7h7v1H4zM1 10h2v1H1zM4 10h7v1H4z" stroke="#444" stroke-width=".6" fill="#444" /></svg></button>
			<div class="pager">
				<button aria-label="First"><svg viewBox="0 0 12 12"><path d="M2 1v10M9 1L4 6l5 5" stroke="#888" /></svg></button>
				<button aria-label="Previous"><svg viewBox="0 0 12 12"><path d="M8 1L3 6l5 5" stroke="#888" /></svg></button>
				<button aria-label="Next"><svg viewBox="0 0 12 12"><path d="M4 1l5 5-5 5" stroke="#444" /></svg></button>
				<button aria-label="Last"><svg viewBox="0 0 12 12"><path d="M10 1v10M3 1l5 5-5 5" stroke="#444" /></svg></button>
			</div>
		</div>
		<div class="tabs">
			{#each tabs as tab, i}
				<button class="tab" class:active={i === activeTab} class:long={tab.endsWith('...')} on:click={() => (activeTab = i)}>
					<svg viewBox="0 0 12 14" aria-hidden="true">
						<path d="M3.500 1.500h5l3 3v7h-8z" fill="#fff" stroke="#555" />
						<path d="M1.500 3v10.500H9" fill="none" stroke="#555" />
						<path d="M4 2h3v3h3v5H4z" fill="#888" />
					</svg>
					{tab}
				</button>
			{/each}
		</div>
	</footer>
</div>

<style>
	:global(body) {
		background: #fff;
	}
	.window {
		display: flex;
		flex-direction: column;
		min-height: 100vh;
		font-family: 'Open Sans', 'Noto Sans', sans-serif;
		color: #333;
	}
	button {
		display: flex;
		align-items: center;
		justify-content: center;
		padding: 0;
		border: 0;
		background: none;
		font: inherit;
		color: inherit;
	}
	a {
		color: inherit;
		text-decoration: none;
	}
	svg {
		display: block;
		flex-shrink: 0;
	}

	/* browser chrome */
	.titlebar {
		display: flex;
		height: 20px;
		background:
			radial-gradient(circle at 1103px 17px, #9ab0c8 2px, transparent 12px),
			radial-gradient(circle at 1163px 17px, #9ab0c8 2px, transparent 12px),
			radial-gradient(circle at 1230px 20px, #4d6080 3px, transparent 14px),
			radial-gradient(circle at 1290px 20px, #4d6080 3px, transparent 14px),
			radial-gradient(circle at 1345px 16px, #93aac4 2px, transparent 12px),
			radial-gradient(circle at 205px 16px, #9ab0c4 2px, transparent 12px),
			linear-gradient(100deg, #8699bf 0, #6781b3 300px, #5873a5 740px, #6c88b8 800px, #6783b5 960px, #5975a8 1100px, #5d7aad 1700px, #6985b6 100%);
		border-bottom: 1px solid #33477a;
		box-sizing: border-box;
		font-size: 9px;
	}
	.browser-tab {
		position: relative;
		display: flex;
		align-items: center;
		width: 166px;
		box-sizing: border-box;
		padding: 2px 8px 0 16px;
		height: 20px;
	}
	.tab-shape {
		position: absolute;
		inset: 0;
		width: 100%;
		height: 100%;
	}
	.favicon,
	.browser-title,
	.close {
		position: relative;
	}
	.favicon {
		width: 13px;
		height: 12px;
		background: #1a57a5;
		color: #fff;
		font-size: 8px;
		line-height: 12px;
		font-weight: 700;
		text-align: center;
	}
	.browser-title {
		margin-left: 3px;
		line-height: 14px;
	}
	.close {
		margin-left: auto;
		width: 14px;
		height: 14px;
		font-size: 12px;
		line-height: 14px;
		color: #444;
	}
	.new-tab {
		width: 22px;
		height: 11px;
		margin-top: 5px;
		background: #b9c5dc;
		border: 1px solid #5a6d97;
		border-radius: 3px;
		transform: skewX(20deg);
	}
	.window-buttons {
		display: flex;
		gap: 5px;
		margin-left: auto;
		padding-right: 2px;
		color: #fff;
	}
	.user {
		width: 28px;
		height: 15px;
		background: #8090b4;
		border: 1px solid #c9d2e6;
		border-top: 0;
		border-radius: 0 0 4px 4px;
	}
	.group {
		display: flex;
		height: 14px;
		border: 1px solid #c9d2e6;
		border-top: 0;
		border-radius: 0 0 4px 4px;
		overflow: hidden;
		box-sizing: border-box;
	}
	.group button {
		width: 22px;
		background: linear-gradient(#a3b1cd, #7085b0);
		border-right: 1px solid #55688f;
	}
	.group .exit {
		width: 36px;
		background: linear-gradient(#dd8478, #bd3325);
		border: 0;
	}
	.group svg {
		width: 12px;
		height: 10px;
	}

	.navbar {
		display: flex;
		align-items: center;
		height: 25px;
		padding: 2px 0 0 3px;
		box-sizing: border-box;
		background: #f2f2f2;
	}
	.navbar > button {
		width: 23px;
	}
	.navbar > button svg {
		width: 13px;
		height: 13px;
	}
	.omnibox {
		display: flex;
		flex: 1;
		align-items: center;
		height: 21px;
		margin: 0 4px;
		padding: 0 4px;
		box-sizing: border-box;
		background: #fff;
		border: 1px solid #b4b4b4;
		border-radius: 2px;
	}
	.lock {
		width: 10px;
		height: 13px;
	}
	.url {
		flex: 1;
		margin-left: 6px;
		font-size: 12px;
		line-height: 18px;
		color: #888;
	}
	.scheme {
		color: #1e8e1e;
	}
	.host {
		color: #222;
	}
	.star {
		width: 14px;
		height: 14px;
	}
	.extensions {
		display: flex;
	}
	.extensions button {
		width: 25px;
		position: relative;
	}
	.extensions svg {
		width: 16px;
		height: 16px;
	}
	.abp {
		fill: #fff;
		font-size: 6px;
		font-weight: 700;
	}
	.ghost span {
		position: absolute;
		right: 0;
		bottom: -3px;
		width: 9px;
		height: 9px;
		background: #2d1236;
		color: #fff;
		font-size: 8px;
		line-height: 9px;
		font-weight: 700;
		text-align: center;
	}

	.bookmarks {
		display: flex;
		align-items: center;
		gap: 10px;
		height: 23px;
		padding: 0 7px 0 5px;
		box-sizing: border-box;
		background: linear-gradient(#e6e6e6, #dcdcdc);
		border-bottom: 1px solid #a9a9a9;
		font-size: 9px;
		line-height: 14px;
		white-space: nowrap;
	}
	.bookmarks a {
		display: flex;
		align-items: center;
		gap: 4px;
	}
	.bookmarks svg {
		width: 13px;
		height: 13px;
	}
	.bookmarks text {
		fill: #fff;
		font-size: 9px;
		font-weight: 700;
	}
	.bookmarks .other {
		margin-left: auto;
		padding-left: 5px;
		border-left: 1px solid #cfcfcf;
	}

	/* document header */
	.app-header {
		display: flex;
		align-items: center;
		height: 32px;
		padding: 0 20px 0 9px;
		background: #f9f9f9;
	}
	.logo {
		display: flex;
		flex-direction: column;
		width: 63px;
		color: #1c5dab;
	}
	.logo b {
		font-size: 12px;
		line-height: 16px;
	}
	.logo small {
		font-size: 7px;
		line-height: 6px;
		font-weight: 600;
		color: #44577c;
	}
	.app-header > button {
		width: 24px;
	}
	.app-header > button svg {
		width: 14px;
		height: 14px;
	}
	h1 {
		margin: 0 0 0 10px;
		font-size: 18px;
		line-height: 24px;
		font-weight: 400;
		color: #222;
	}
	.workspace {
		margin: 2px 0 0 11px;
		font-size: 12px;
		line-height: 20px;
		color: #999;
	}
	.account {
		display: flex;
		align-items: center;
		margin-left: auto;
		font-size: 12px;
	}
	.bell svg {
		width: 14px;
		height: 14px;
	}
	.share {
		width: 53px;
		height: 26px;
		margin: 0 9px 0 19px;
		background: #1b5faa;
		border-radius: 3px;
		color: #fff;
		font-weight: 600;
	}
	.help {
		gap: 5px;
	}
	.help svg {
		width: 15px;
		height: 15px;
	}
	.help text {
		fill: #fff;
		font-size: 12px;
		font-weight: 700;
	}
	.caret {
		border: 3px solid transparent;
		border-top: 4px solid #333;
		border-bottom: 0;
	}
	.profile {
		gap: 4px;
		margin-left: 17px;
	}

	.toolbar {
		display: flex;
		align-items: center;
		height: 30px;
		padding-left: 1px;
	}
	.toolbar button {
		width: 27px;
		height: 27px;
	}
	.divider {
		width: 1px;
		height: 15px;
		margin: 0 7px;
		background: #c9c9c9;
	}
	.glyph {
		width: 16px;
		height: 16px;
	}
	.glyph path {
		fill: none;
	}
	.glyph .soft {
		stroke: #999;
	}
	.glyph .line {
		stroke: #444;
		stroke-width: 1.3;
	}
	.glyph .solid {
		fill: #333;
	}

	/* canvas */
	.stage {
		position: relative;
		display: flex;
		flex: 1;
	}
	.model {
		width: 100%;
	}
	.part path,
	.dark-blue {
		stroke: #021a3d;
		stroke-width: 0.8;
	}
	.dark-blue {
		fill: #034299;
	}
	.metal path,
	.metal ellipse {
		stroke: #1a1c1d;
		stroke-width: 0.7;
	}
	.rods path {
		fill: none;
		stroke-width: 10;
	}
	.rods .edge {
		stroke: #1b1e20;
		stroke-width: 12;
	}
	.rods .mid {
		stroke: #5f676c;
	}
	.rods .light {
		stroke: #8b959c;
	}
	.rods .thin {
		stroke-width: 8;
	}
	.rods .edge.thin {
		stroke-width: 10;
	}
	.rods .shine {
		stroke: #7b858b;
		stroke-width: 4;
	}

	.instances {
		position: absolute;
		top: 0;
		left: 0;
		width: 161px;
		padding-bottom: 4px;
		box-sizing: border-box;
		background: #fff;
		border: 1px solid #dfe3e9;
		border-left: 0;
		box-shadow: 1px 1px 2px #e3e6ec;
		font-size: 10px;
		color: #808080;
	}
	h2 {
		margin: 0;
		padding: 4px 8px 5px;
		font-size: 10px;
		line-height: 17px;
		font-weight: 600;
		color: #444;
	}
	ul {
		display: grid;
		grid-auto-rows: 1fr;
		height: 670px;
		margin: 0;
		padding: 0;
		list-style: none;
	}
	li {
		display: flex;
		align-items: center;
		padding-left: 8px;
		white-space: nowrap;
	}
	.name {
		margin-left: auto;
		width: 139px;
	}
	.mate {
		gap: 5px;
		padding-left: 15px;
	}
	.mate span {
		margin-left: -1px;
	}
	.chevron svg {
		width: 9px;
		height: 9px;
	}
	.chevron path {
		fill: none;
		stroke: #333;
		stroke-width: 1.5;
	}

	.view-cube {
		position: absolute;
		top: 8px;
		right: 8px;
		width: 130px;
	}
	.view-cube button {
		margin: -23px 1px 0 auto;
	}
	.view-cube button svg {
		width: 22px;
		height: 24px;
		fill: none;
		stroke: #a3acb8;
	}
	.axis {
		font-size: 10px;
	}
	.face {
		font-size: 9px;
		fill: #555;
	}
	.face.small {
		font-size: 7px;
	}

	/* document tabs */
	.tabbar {
		display: flex;
		height: 24px;
		box-sizing: border-box;
		background: #dcdcdc;
		border-top: 1px solid #b9bdc1;
		font-size: 11px;
		line-height: 18px;
		color: #666;
	}
	.tab-controls {
		display: flex;
		align-items: center;
		width: 164px;
		height: 21px;
	}
	.tab-controls > button {
		width: 37px;
	}
	.tab-controls svg {
		width: 12px;
		height: 12px;
	}
	.pager {
		display: flex;
		margin-left: 6px;
	}
	.pager button {
		width: 19px;
	}
	.pager path {
		fill: none;
		stroke-width: 1.8;
	}
	.tabs {
		display: flex;
		width: 1620px;
		height: 21px;
		overflow: hidden;
		border-right: 1px solid #b9bdc1;
		box-sizing: border-box;
	}
	.tab {
		flex-shrink: 0;
		justify-content: flex-start;
		gap: 3px;
		padding: 0 12px 2px 8px;
		background: #e8e8e8;
		border-right: 1px solid #cdd1d5;
		border-bottom: 1px solid #cdd1d5;
		white-space: nowrap;
	}
	.tab.long {
		width: 193px;
	}
	.tab.active {
		background: #fff;
		color: #444;
	}
	.tab svg {
		width: 12px;
		height: 14px;
	}
</style>
